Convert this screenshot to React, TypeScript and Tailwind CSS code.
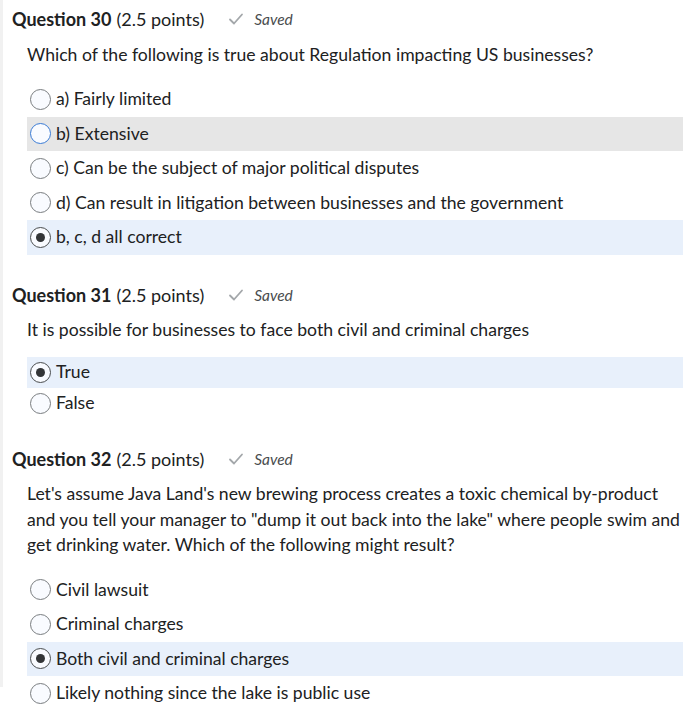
import React from "react";

type Opt = { label: string; state?: "selected" | "hover" };

type Q = {
  num: number;
  text: string[];
  rowH: string;
  gapTop: string;
  options: Opt[];
};

const questions: Q[] = [
  {
    num: 30,
    text: ["Which of the following is true about Regulation impacting US businesses?"],
    rowH: "h-[34.5px]",
    gapTop: "mt-[15px]",
    options: [
      { label: "a) Fairly limited" },
      { label: "b) Extensive", state: "hover" },
      { label: "c) Can be the subject of major political disputes" },
      { label: "d) Can result in litigation between businesses and the government" },
      { label: "b, c, d all correct", state: "selected" },
    ],
  },
  {
    num: 31,
    text: ["It is possible for businesses to face both civil and criminal charges"],
    rowH: "h-[31px]",
    gapTop: "mt-[14px]",
    options: [{ label: "True", state: "selected" }, { label: "False" }],
  },
  {
    num: 32,
    text: [
      "Let's assume Java Land's new brewing process creates a toxic chemical by-product",
      "and you tell your manager to \"dump it out back into the lake\" where people swim and",
      "get drinking water. Which of the following might result?",
    ],
    rowH: "h-[34.5px]",
    gapTop: "mt-[15px]",
    options: [
      { label: "Civil lawsuit" },
      { label: "Criminal charges" },
      { label: "Both civil and criminal charges", state: "selected" },
      { label: "Likely nothing since the lake is public use" },
    ],
  },
];

function Radio({ state }: { state?: Opt["state"] }) {
  const ring =
    state === "selected"
      ? "border-[#494c4e] border-[1.5px]"
      : state === "hover"
      ? "border-[#3a7bd5] border"
      : "border-[#797d80] border";
  return (
    <span
      className={`w-[21px] h-[21px] rounded-full bg-[#f9fbff] flex items-center justify-center shrink-0 ${ring}`}
    >
      {state === "selected" && <span className="w-[9px] h-[9px] rounded-full bg-[#333537]" />}
    </span>
  );
}

function Check() {
  return (
    <svg width="16" height="14" viewBox="0 0 16 14" fill="none">
      <path d="M2 7.5 L6 11.5 L14 2.5" stroke="#a3a7aa" strokeWidth="1.8" strokeLinecap="round" strokeLinejoin="round" />
    </svg>
  );
}

function Question({ q, first }: { q: Q; first: boolean }) {
  return (
    <section className={first ? "pt-[8px]" : "mt-[29px]"}>
      <div className="flex items-center h-[22px] text-[18px] leading-[22px]">
        <span className="font-bold">Question {q.num}</span>
        <span className="ml-[5px]">(2.5 points)</span>
        <span className="ml-[24px] flex items-center gap-[10px] text-[15.5px] italic text-[#494c4e]">
          <Check />
          Saved
        </span>
      </div>
      <div className="pl-[15px] mt-[11.5px] text-[17.6px] leading-[25.5px]">
        {q.text.map((t) => (
          <div key={t} className="whitespace-nowrap">{t}</div>
        ))}
      </div>
      <div className={`pl-[15px] ${q.gapTop}`}>
        {q.options.map((o) => (
          <div
            key={o.label}
            className={`${q.rowH} flex items-center pl-[3px] text-[17.6px] ${
              o.state === "hover" ? "bg-[#e6e6e6]" : o.state === "selected" ? "bg-[#e8f0fb]" : ""
            }`}
          >
            <Radio state={o.state} />
            <span className="ml-[5px] whitespace-nowrap">{o.label}</span>
          </div>
        ))}
      </div>
    </section>
  );
}

export default function App() {
  return (
    <div
      className="w-[695px] h-[719px] bg-white text-[#202122] flex overflow-hidden"
      style={{ fontFamily: "Lato, 'Noto Sans', sans-serif" }}
    >
      <div className="w-[3px] h-[687px] bg-[#f1f1f1] shrink-0" />
      <div className="flex-1 pl-[9px] pr-[12px]">
        {questions.map((q, i) => (
          <Question key={q.num} q={q} first={i === 0} />
        ))}
      </div>
    </div>
  );
}
